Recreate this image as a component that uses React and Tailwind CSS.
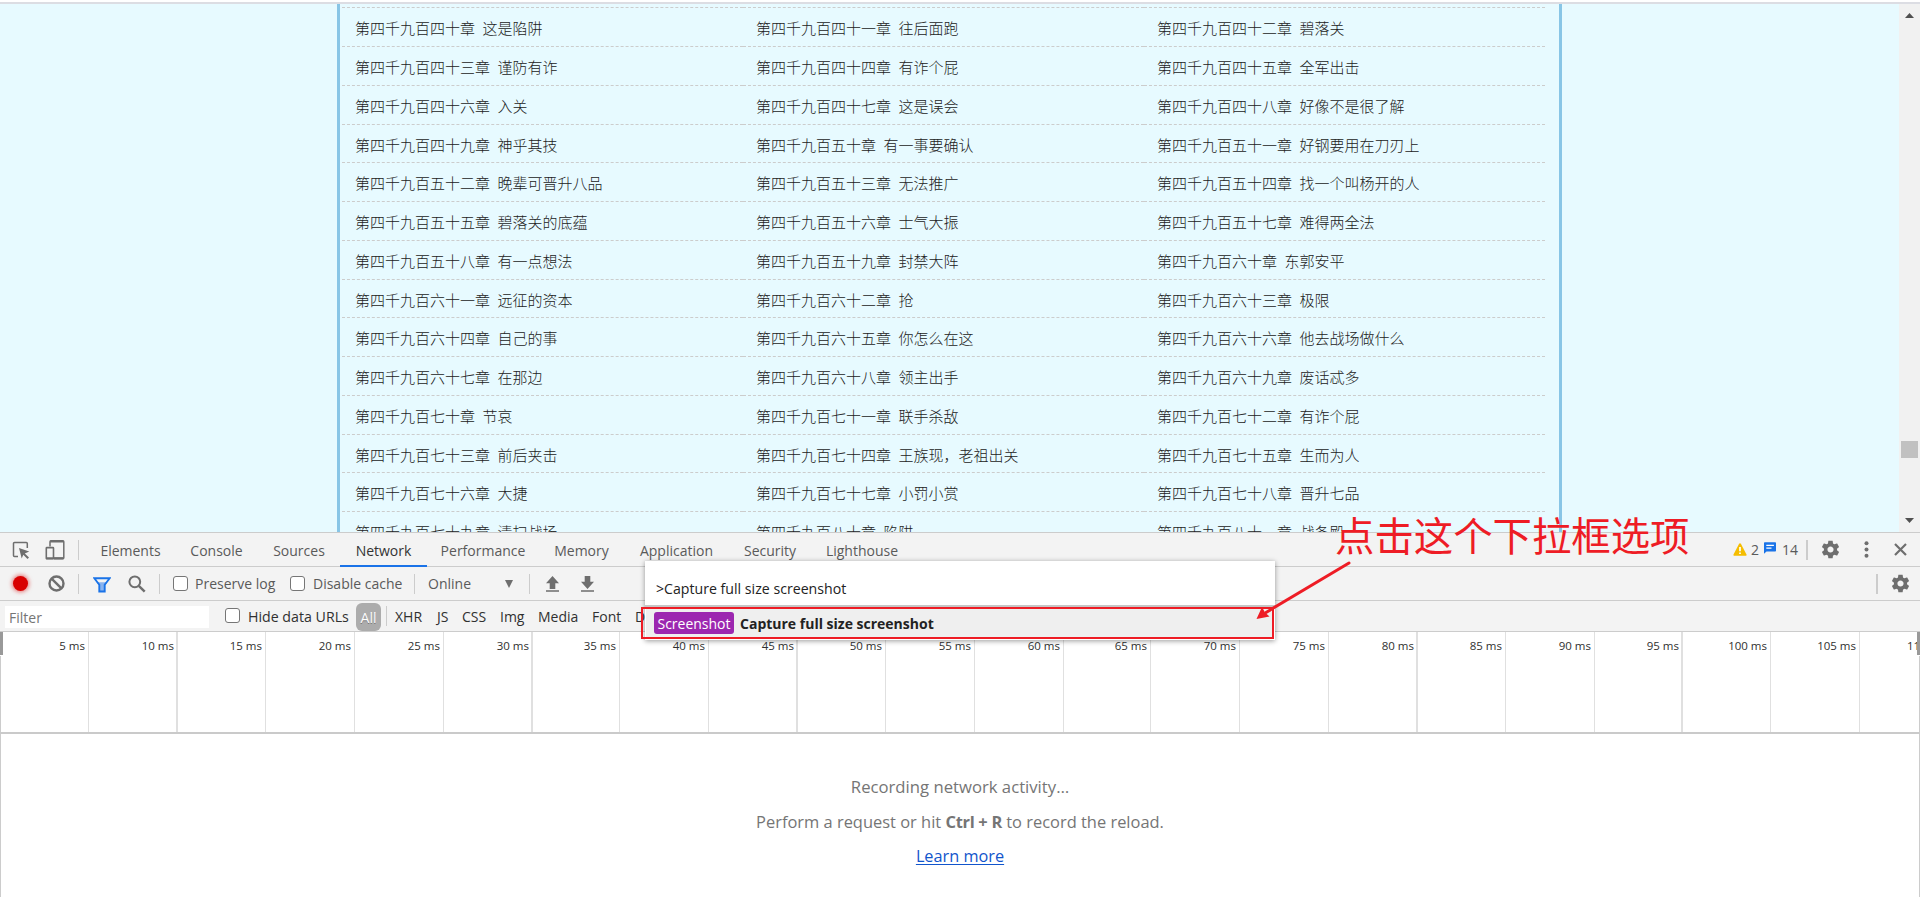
import React from 'react';

const chapters = [
  ['第四千九百四十章 这是陷阱', '第四千九百四十一章 往后面跑', '第四千九百四十二章 碧落关'],
  ['第四千九百四十三章 谨防有诈', '第四千九百四十四章 有诈个屁', '第四千九百四十五章 全军出击'],
  ['第四千九百四十六章 入关', '第四千九百四十七章 这是误会', '第四千九百四十八章 好像不是很了解'],
  ['第四千九百四十九章 神乎其技', '第四千九百五十章 有一事要确认', '第四千九百五十一章 好钢要用在刀刃上'],
  ['第四千九百五十二章 晚辈可晋升八品', '第四千九百五十三章 无法推广', '第四千九百五十四章 找一个叫杨开的人'],
  ['第四千九百五十五章 碧落关的底蕴', '第四千九百五十六章 士气大振', '第四千九百五十七章 难得两全法'],
  ['第四千九百五十八章 有一点想法', '第四千九百五十九章 封禁大阵', '第四千九百六十章 东郭安平'],
  ['第四千九百六十一章 远征的资本', '第四千九百六十二章 抢', '第四千九百六十三章 极限'],
  ['第四千九百六十四章 自己的事', '第四千九百六十五章 你怎么在这', '第四千九百六十六章 他去战场做什么'],
  ['第四千九百六十七章 在那边', '第四千九百六十八章 领主出手', '第四千九百六十九章 废话忒多'],
  ['第四千九百七十章 节哀', '第四千九百七十一章 联手杀敌', '第四千九百七十二章 有诈个屁'],
  ['第四千九百七十三章 前后夹击', '第四千九百七十四章 王族现，老祖出关', '第四千九百七十五章 生而为人'],
  ['第四千九百七十六章 大捷', '第四千九百七十七章 小罚小赏', '第四千九百七十八章 晋升七品'],
  ['第四千九百七十九章 清扫战场', '第四千九百八十章 陷阱', '第四千九百八十一章 战备殿'],
];

const tabs = [
  ['Elements', 'w-[89px]'],
  ['Console', 'w-[83px]'],
  ['Sources', 'w-[82px]'],
  ['Network', 'w-[87px]'],
  ['Performance', 'w-[112px]'],
  ['Memory', 'w-[85px]'],
  ['Application', 'w-[105px]'],
  ['Security', 'w-[82px]'],
  ['Lighthouse', 'w-[102px]'],
];

const filters = [
  ['XHR', 'w-[42px]'],
  ['JS', 'w-[25px]'],
  ['CSS', 'w-[38px]'],
  ['Img', 'w-[38px]'],
  ['Media', 'w-[54px]'],
  ['Font', 'w-[43px]'],
  ['Doc', 'w-[40px]'],
];

/* Right edge of every timeline division, and whether its rule is two pixels wide. */
const divisions = [
  [89], [178, 1], [266], [355], [444], [533, 1], [620], [709], [798, 1], [886], [975],
  [1064], [1151], [1240], [1329], [1418, 1], [1506], [1595], [1683, 1], [1771], [1860],
];

const Divider = ({ className }) => <span className={`h-5 shrink-0 bg-[#ccc] ${className}`} />;

const Checkbox = ({ className }) => (
  <span className={`size-[15px] shrink-0 rounded-[3px] border border-[#767676] bg-white ${className}`} />
);

const Gear = ({ className }) => (
  <svg viewBox="0 0 24 24" className={`size-[21px] shrink-0 ${className}`} fill="#6e6e6e">
    <path d="M19.43 12.98c.04-.32.07-.64.07-.98s-.03-.66-.07-.98l2.11-1.65c.19-.15.24-.42.12-.64l-2-3.46c-.12-.22-.39-.3-.61-.22l-2.49 1c-.52-.4-1.08-.73-1.69-.98l-.38-2.65C14.46 2.18 14.25 2 14 2h-4c-.25 0-.46.18-.49.42l-.38 2.65c-.61.25-1.17.59-1.69.98l-2.49-1c-.23-.09-.49 0-.61.22l-2 3.46c-.13.22-.07.49.12.64l2.11 1.65c-.04.32-.07.65-.07.98s.03.66.07.98l-2.11 1.65c-.19.15-.24.42-.12.64l2 3.46c.12.22.39.3.61.22l2.49-1c.52.4 1.08.73 1.69.98l.38 2.65c.03.24.24.42.49.42h4c.25 0 .46-.18.49-.42l.38-2.65c.61-.25 1.17-.59 1.69-.98l2.49 1c.23.09.49 0 .61-.22l2-3.46c.12-.22.07-.49-.12-.64l-2.11-1.65zM12 15.5c-1.93 0-3.5-1.57-3.5-3.5s1.57-3.5 3.5-3.5 3.5 1.57 3.5 3.5-1.57 3.5-3.5 3.5z" />
  </svg>
);

function BookPage() {
  return (
    <div className="flex h-[528px] overflow-hidden bg-[#e7faff]">
      <div className="ml-[337px] h-full w-[1225px] overflow-hidden border-x-[3px] border-[#88c5e6] pl-[2px] font-['Noto_Sans_CJK_SC',sans-serif] text-[15px] text-[#222]">
        <div className="grid w-[1203px] grid-cols-3">
          {[0, 1, 2].map((i) => (
            <div key={i} className="h-[4.4px] border-b border-dashed border-[#ccc]" />
          ))}
          {chapters.flat().map((title, i) => (
            <div
              key={i}
              className="h-[38.75px] border-b border-dashed border-[#ccc] pl-[13px] pt-px leading-[38px] font-light whitespace-nowrap [word-spacing:4.2px]"
            >
              {title}
            </div>
          ))}
        </div>
      </div>
      <div className="ml-auto flex w-[21px] flex-col items-center bg-[#f1f1f1]">
        <svg className="mt-[9px] h-[5px] w-[9px] shrink-0" viewBox="0 0 9 5" fill="#505050">
          <path d="M4.5 0 9 5H0z" />
        </svg>
        <div className="mt-[423px] h-[17px] w-[17px] shrink-0 bg-[#c1c1c1]" />
        <svg className="mt-[60px] h-[5px] w-[9px] shrink-0" viewBox="0 0 9 5" fill="#505050">
          <path d="M0 0h9L4.500 5z" />
        </svg>
      </div>
    </div>
  );
}

function TabBar() {
  return (
    <div className="flex h-[34px] items-center border-b border-[#ccc] text-[14px] text-[#5a5a5a]">
      <svg className="ml-[12px] size-[18px] shrink-0" viewBox="0 0 18 18" fill="none">
        <path d="M15.300 7V2.500a1 1 0 0 0-1-1H2.500a1 1 0 0 0-1 1v12a1 1 0 0 0 1 1H6" stroke="#6e6e6e" strokeWidth="1.500" />
        <path d="M7 7l10.200 3.600-4.400 1.800 4.200 4.100-1.500 1.500-4.200-4.200-1.600 3.700z" fill="#6e6e6e" />
      </svg>
      <svg className="ml-[15px] h-[20px] w-[20px] shrink-0" viewBox="0 0 20 20" fill="none" stroke="#6e6e6e">
        <path d="M5 6.500V1.800a1 1 0 0 1 1-1h11.800a1 1 0 0 1 1 1v15.900a1 1 0 0 1-1 1H9" strokeWidth="1.500" />
        <path d="M9 18.200h9.500" strokeWidth="2.200" />
        <rect x="1.300" y="7.600" width="7.200" height="11.200" rx=".6" strokeWidth="1.600" />
        <path d="M1.300 18.200h7.200M5 1.500h13.500" strokeWidth="2" />
      </svg>
      <Divider className="ml-[13px] w-px" />
      <div className="ml-[7px] flex h-full">
        {tabs.map(([name, width]) => (
          <div
            key={name}
            className={`relative text-center leading-[35px] ${width} ${name === 'Network' ? 'text-[#333]' : ''}`}
          >
            {name}
            {name === 'Network' && <span className="absolute inset-x-0 -bottom-px h-[2px] bg-[#1a73e8]" />}
          </div>
        ))}
      </div>
      <div className="ml-auto flex items-center">
        <svg className="mt-[-1px] h-[13px] w-[14px]" viewBox="0 0 14 13">
          <path d="M7 .3c.4 0 .7.200.9.500l5.600 10.700c.3.600 0 1.300-.8 1.300H1.300c-.8 0-1.100-.7-.8-1.300L6.100.8C6.300.5 6.600.3 7 .3z" fill="#f5bd00" />
          <path d="M7 4v4.300M7 9.500v1.600" stroke="#fff" strokeWidth="1.700" />
        </svg>
        <span className="ml-[4px]">2</span>
        <svg className="ml-[5px] mt-[-3px] h-[12px] w-[12px]" viewBox="0 0 12 12">
          <path d="M1 .3h10c.6 0 1 .4 1 1v7.200c0 .6-.4 1-1 1H2.500L0 11.800V1.300c0-.6.4-1 1-1z" fill="#1a73e8" />
          <path d="M2.300 3.400h7.600M2.300 6.100h5.200" stroke="#fff" strokeWidth="1.300" />
        </svg>
        <span className="ml-[6px]">14</span>
        <Divider className="ml-[8px] w-[2px]" />
        <Gear className="ml-[12px]" />
        <svg className="ml-[23px] h-[17px] w-[5px]" viewBox="0 0 5 17" fill="#6e6e6e">
          <circle cx="2.500" cy="2.200" r="2" />
          <circle cx="2.500" cy="8.500" r="2" />
          <circle cx="2.500" cy="14.800" r="2" />
        </svg>
        <svg className="ml-[25px] mr-[13px] size-[13px]" viewBox="0 0 13 13" stroke="#6e6e6e" strokeWidth="2.200">
          <path d="M1 1l11 11M12 1 1 12" />
        </svg>
      </div>
    </div>
  );
}

function ControlBar() {
  return (
    <div className="flex h-[34px] items-center border-b border-[#ccc] text-[14px] text-[#5a5a5a]">
      <span className="ml-[13px] size-[15px] shrink-0 rounded-full bg-[#d80000] shadow-[0_0_4px_1px_rgba(216,0,0,0.55)]" />
      <svg className="ml-[20px] size-[17px] shrink-0" viewBox="0 0 17 17" fill="none" stroke="#6e6e6e" strokeWidth="2.400">
        <circle cx="8.500" cy="8.500" r="7" />
        <path d="M3.600 3.600l9.800 9.800" />
      </svg>
      <Divider className="ml-[13px] w-px" />
      <svg className="ml-[14px] mt-[2px] h-[16px] w-[18px] shrink-0" viewBox="0 0 18 16" fill="none">
        <path d="M3.500 5.300h11L11.500 9v5.500h-5V9z" fill="#8ab4f0" />
        <path d="M1.300 1.200h15.400L11.700 7.800v6.700H6.300V7.800z" stroke="#1a73e8" strokeWidth="1.900" />
      </svg>
      <svg className="ml-[17px] size-[18px] shrink-0" viewBox="0 0 18 18" fill="none" stroke="#6e6e6e">
        <circle cx="6.800" cy="6.800" r="5.400" strokeWidth="2" />
        <path d="M10.800 10.800l5.900 5.900" strokeWidth="2.400" />
      </svg>
      <Divider className="ml-[13px] w-px" />
      <Checkbox className="ml-[13px]" />
      <span className="ml-[7px] w-[95px] shrink-0">Preserve log</span>
      <Checkbox className="" />
      <span className="ml-[8px] w-[101px] shrink-0">Disable cache</span>
      <Divider className="w-px" />
      <span className="ml-[13px] w-[77px] shrink-0">Online</span>
      <svg className="h-[8px] w-[8px] shrink-0" viewBox="0 0 8 8" fill="#6e6e6e">
        <path d="M0 0h8L4 8z" />
      </svg>
      <Divider className="ml-[16px] w-px" />
      <svg className="ml-[16px] h-[16px] w-[13px] shrink-0" viewBox="0 0 13 16" fill="#6e6e6e">
        <path d="M6.500 0 13 7.200H9.300V13H3.700V7.200H0zM0 14.200h13v1.600H0z" />
      </svg>
      <svg className="ml-[22px] h-[16px] w-[13px] shrink-0" viewBox="0 0 13 16" fill="#6e6e6e">
        <path d="M6.500 13 0 5.800h3.700V0h5.600v5.800H13zM0 14.200h13v1.600H0z" />
      </svg>
      <Divider className="ml-auto w-[2px]" />
      <Gear className="ml-[12px] mr-[9px]" />
    </div>
  );
}

function FilterBar() {
  return (
    <div className="flex h-[31px] items-center border-b border-[#ccc] text-[14px] text-[#303030]">
      <div className="ml-[5px] mt-px h-[22px] w-[204px] shrink-0 bg-white pl-[4px] leading-[24px] text-[#757575]">Filter</div>
      <Checkbox className="ml-[16px] mt-[-1px]" />
      <span className="ml-[8px] w-[108px] shrink-0 pt-px text-[14.200px]">Hide data URLs</span>
      <span className="h-[28px] w-[25px] shrink-0 self-end rounded-[6px] bg-[#acacac] text-center leading-[29px] text-white [text-shadow:0_1px_0_rgba(0,0,0,0.35)]">
        All
      </span>
      <Divider className="ml-[5px] w-px" />
      <div className="ml-[8px] flex pt-px">
        {filters.map(([name, width]) => (
          <span key={name} className={width}>{name}</span>
        ))}
      </div>
    </div>
  );
}

function Timeline() {
  return (
    <div className="relative flex h-[102px] overflow-hidden border-b-2 border-[#cacaca] bg-white text-[11.500px] text-[#303030]">
      {divisions.map(([edge, thick], i) => (
        <div
          key={edge}
          className={`shrink-0 border-[#e0e0e0] text-right leading-[28px] whitespace-nowrap ${thick ? 'border-r-2 pr-[2px]' : 'border-r pr-[3px]'}`}
          style={{ width: edge - (i ? divisions[i - 1][0] : 0) }}
        >
          {(i + 1) * 5} ms
        </div>
      ))}
      <div className="w-[57px] shrink-0 overflow-hidden pl-[47px] leading-[28px] whitespace-nowrap">110 ms</div>
      <span className="absolute left-0 top-0 h-[23px] w-[3px] bg-[#999]" />
      <span className="absolute right-0 top-0 h-[23px] w-[3px] bg-[#999]" />
      <span className="absolute left-0 top-[24px] h-[76px] w-px bg-[#ccc]" />
      <span className="absolute right-0 top-[24px] h-[76px] w-px bg-[#ccc]" />
    </div>
  );
}

function CommandMenu() {
  return (
    <div className="absolute left-[645px] top-[561px] h-[79px] w-[630px] bg-white text-[14px] text-[#222] shadow-[0_1px_5px_rgba(0,0,0,0.4)]">
      <div className="h-[46px] border-b-2 border-[#c6c6c6] pl-[11px] text-[14.150px] leading-[56px]">&gt;Capture full size screenshot</div>
      <div className="mx-px flex h-[31px] items-center bg-[#efefef] pl-[8px]">
        <span className="h-[22px] w-[80px] rounded-[3px] bg-[#9c27b0] text-center leading-[24px] text-white">Screenshot</span>
        <span className="ml-[6px] pt-[2px] font-bold">Capture full size screenshot</span>
      </div>
    </div>
  );
}

export default function App() {
  return (
    <div className="relative flex h-[897px] w-[1920px] flex-col overflow-hidden bg-white font-['Open_Sans',sans-serif]">
      <div className="h-[4px] shrink-0 border-b-2 border-[#dcdde3] bg-white" />
      <BookPage />
      <div className="border-t border-[#ccc] bg-[#f3f3f3]">
        <TabBar />
        <ControlBar />
        <FilterBar />
        <Timeline />
      </div>
      <div className="flex flex-1 flex-col items-center border-x border-[#ccc] bg-white pt-[35px] text-[16.450px] leading-[35px] text-[#757575]">
        <p className="text-[16.700px]">Recording network activity…</p>
        <p>Perform a request or hit <b className="font-bold tracking-[-0.3px]">Ctrl + R</b> to record the reload.</p>
        <a className="text-[16.300px] text-[#1155cc] underline underline-offset-2">Learn more</a>
      </div>

      <CommandMenu />
      <div className="absolute left-[641px] top-[607px] h-[32px] w-[633px] border-2 border-[#ee1c25]" />
      <svg className="absolute left-[1250px] top-[555px] h-[70px] w-[110px]" viewBox="0 0 110 70">
        <path d="M99 8 16 57.500" stroke="#ee1c25" strokeWidth="3" strokeLinecap="round" />
        <path d="M6.500 64 12 52l3 5.500 4.500 4z" fill="#ee1c25" />
      </svg>
      <div className="absolute left-[1335px] top-[510px] font-['Noto_Sans_CJK_SC',sans-serif] text-[39.400px] leading-[48px] whitespace-nowrap text-[#ee1c25]">
        点击这个下拉框选项
      </div>
    </div>
  );
}
